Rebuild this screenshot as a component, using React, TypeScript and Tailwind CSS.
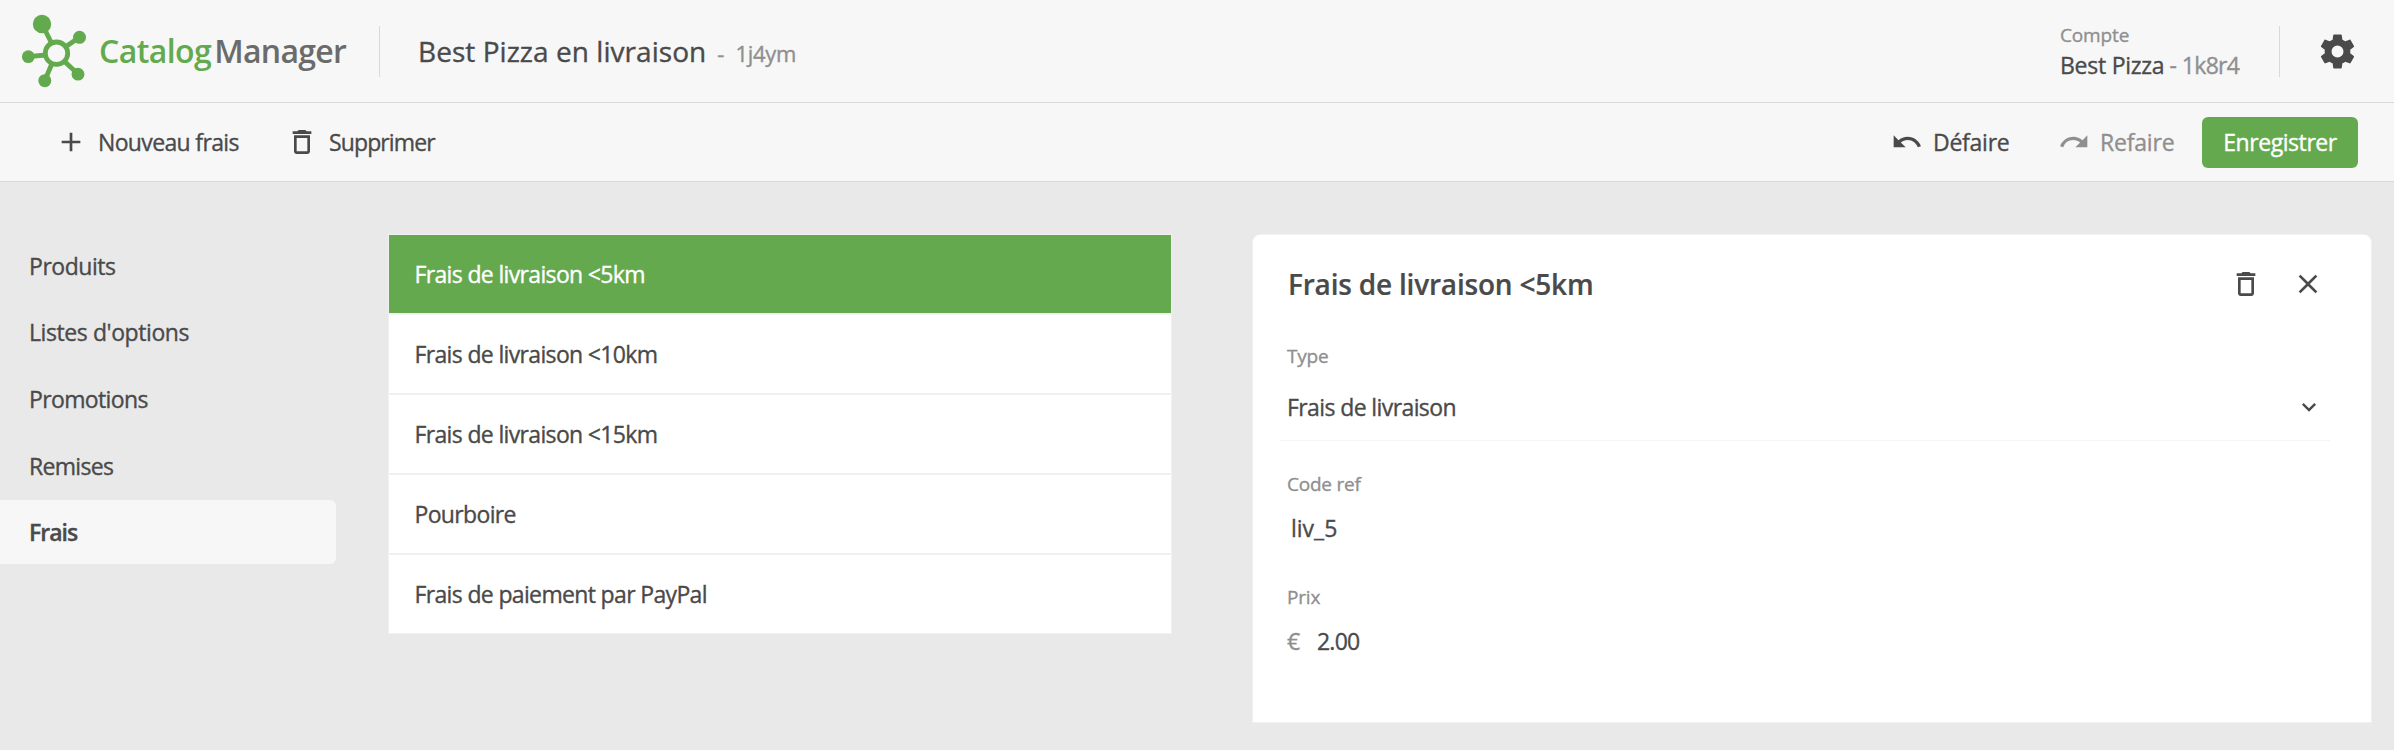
import React from "react";
import { MdAdd, MdClose, MdDeleteOutline, MdKeyboardArrowDown, MdRedo, MdUndo } from "react-icons/md";

const categories = [
  { label: "Produits", spacing: "tracking-[-0.46px]" },
  { label: "Listes d'options", spacing: "tracking-[-0.42px]" },
  { label: "Promotions", spacing: "tracking-[-0.63px]" },
  { label: "Remises", spacing: "tracking-[-0.68px]" },
  { label: "Frais", spacing: "tracking-[-0.98px]", active: true },
];

const fees = [
  { label: "Frais de livraison <5km", active: true },
  { label: "Frais de livraison <10km" },
  { label: "Frais de livraison <15km" },
  { label: "Pourboire" },
  { label: "Frais de paiement par PayPal" },
];

function Logo() {
  return (
    <svg className="h-[74px] w-[66px]" viewBox="21 14 66 74" fill="none" stroke="#62aa4d">
      <circle cx="56.5" cy="53.2" r="11.2" strokeWidth="4.8" />
      <path d="M42 24l9.500 19M79.500 37.300L66 46.500M28 56.700l18-1.700M44.700 80.700L52 63.500M78 74L64.500 61.500" strokeWidth="4.800" />
      <g fill="#62aa4d" stroke="none">
        <circle cx="42" cy="24" r="9.2" />
        <circle cx="79.5" cy="37.3" r="6.5" />
        <circle cx="28.3" cy="56.7" r="6.4" />
        <circle cx="44.8" cy="80.7" r="6.5" />
        <circle cx="78" cy="74.2" r="6.4" />
      </g>
    </svg>
  );
}

function Cog() {
  return (
    <svg className="size-[41px]" viewBox="0 0 24 24" fill="currentColor">
      <path d="M12 15.500A3.500 3.500 0 0 1 8.500 12 3.500 3.500 0 0 1 12 8.500a3.500 3.500 0 0 1 3.500 3.500 3.500 3.500 0 0 1-3.500 3.500m7.430-2.530c.040-.320.070-.640.070-.970s-.030-.660-.070-1l2.110-1.630c.190-.150.240-.420.120-.640l-2-3.460c-.120-.220-.390-.310-.610-.220l-2.490 1c-.520-.390-1.060-.730-1.690-.980l-.370-2.650A.506.506 0 0 0 14 2h-4c-.250 0-.460.180-.500.420l-.370 2.650c-.630.250-1.170.590-1.690.980l-2.490-1c-.220-.090-.490 0-.610.220l-2 3.460c-.130.220-.070.490.120.640L4.570 11c-.040.340-.070.670-.070 1s.030.650.070.970l-2.110 1.660c-.190.150-.250.420-.120.640l2 3.460c.120.220.390.300.610.220l2.490-1.010c.520.400 1.060.740 1.690.990l.370 2.650c.040.240.250.420.500.420h4c.250 0 .460-.180.500-.420l.370-2.650c.630-.260 1.170-.590 1.690-.990l2.490 1.010c.220.080.490 0 .610-.220l2-3.460c.120-.220.070-.490-.120-.640z" />
    </svg>
  );
}

function Header() {
  return (
    <header className="flex h-[103px] shrink-0 items-center border-b border-[#d9d9d9] bg-[#f7f7f7]">
      <div className="flex w-[379px] shrink-0 items-center pl-[21px]">
        <Logo />
        <div className="ml-[12px] flex gap-[3px] text-[32px] font-semibold [-webkit-text-stroke:0]">
          <span className="tracking-[-0.59px] text-[#62aa4d]">Catalog</span>
          <span className="tracking-[-0.7px] text-[#6b6b6b]">Manager</span>
        </div>
      </div>
      <div className="h-[51px] w-px bg-[#d9d9d9]" />
      <div className="flex items-baseline pl-[38px]">
        <h1 className="text-[28px] tracking-[0.05px]">Best Pizza en livraison</h1>
        <span className="ml-[11px] text-[22px] text-[#8f8f8f]">-</span>
        <span className="ml-[11px] text-[22px] tracking-[-0.25px] text-[#8f8f8f]">1j4ym</span>
      </div>
      <div className="ml-auto w-[219px] pb-[3px]">
        <div className="text-[19px] leading-[30px] tracking-[-0.15px] text-[#8f8f8f]">Compte</div>
        <div className="flex gap-[5px] leading-[30px]">
          <span className="tracking-[-0.25px]">Best Pizza</span>
          <span className="text-[#8f8f8f]">-</span>
          <span className="tracking-[-0.7px] text-[#8f8f8f]">1k8r4</span>
        </div>
      </div>
      <div className="h-[51px] w-px bg-[#d9d9d9]" />
      <button className="ml-[37px] mr-[36px]">
        <Cog />
      </button>
    </header>
  );
}

function Toolbar() {
  return (
    <div className="flex h-[79px] shrink-0 items-center border-b border-[#d9d9d9] bg-[#f7f7f7] pl-[55px] pr-[36px]">
      <button className="flex w-[231px] items-center gap-[11px]">
        <MdAdd className="size-8" />
        <span className="tracking-[-0.65px]">Nouveau frais</span>
      </button>
      <button className="flex items-center gap-[11px]">
        <MdDeleteOutline className="size-8" />
        <span className="tracking-[-0.88px]">Supprimer</span>
      </button>
      <button className="ml-auto flex w-[167px] items-center gap-[10px]">
        <MdUndo className="size-8" />
        <span className="tracking-[-0.25px]">Défaire</span>
      </button>
      <button className="flex w-[144px] items-center gap-[10px] text-[#8f8f8f]">
        <MdRedo className="size-8" />
        <span className="tracking-[-0.2px]">Refaire</span>
      </button>
      <button className="h-[51px] w-[156px] rounded-md bg-[#65a94e] text-white">
        <span className="tracking-[-0.43px]">Enregistrer</span>
      </button>
    </div>
  );
}

function Sidebar() {
  return (
    <nav className="flex w-[388px] shrink-0 flex-col gap-[2.6px]">
      {categories.map(({ label, spacing, active }) => (
        <a
          key={label}
          className={`flex h-16 w-[336px] items-center rounded-r-md pl-[29px] ${spacing} ${active ? "bg-[#f7f7f7] font-semibold" : ""}`}
        >
          {label}
        </a>
      ))}
    </nav>
  );
}

function FeeList() {
  return (
    <ul className="flex w-[784px] shrink-0 flex-col gap-[2px] self-start border border-[#f1f1f1] bg-[#f0f0f0]">
      {fees.map(({ label, active }) => (
        <li
          key={label}
          className={`flex h-[78px] items-center pl-[25.5px] tracking-[-0.65px] ${active ? "bg-[#65a94e] text-white" : "bg-white"}`}
        >
          {label}
        </li>
      ))}
    </ul>
  );
}

function FeePanel() {
  return (
    <section className="ml-[80px] h-[489px] w-[1120px] rounded-t-lg border border-[#f1f1f1] bg-white pl-[27px] pr-[41px]">
      <div className="flex h-[97px] items-center pl-[8px]">
        <h2 className="pt-px text-[28px] font-semibold tracking-[-0.2px] [-webkit-text-stroke:0.2px]">Frais de livraison &lt;5km</h2>
        <MdDeleteOutline className="ml-auto size-8" />
        <MdClose className="ml-[30px] mr-[6px] size-8" />
      </div>
      <div className="h-[109px] border-b border-[#f5f5f5] px-[7px] pt-[8px]">
        <div className="text-[19px] leading-[32px] tracking-[-0.2px] text-[#8f8f8f]">Type</div>
        <div className="mt-[17px] flex h-9 items-center justify-between">
          <span className="tracking-[-0.6px]">Frais de livraison</span>
          <MdKeyboardArrowDown className="size-7" />
        </div>
      </div>
      <div className="px-[7px] pt-[27px]">
        <div className="text-[19px] leading-[32px] tracking-[-0.22px] text-[#8f8f8f]">Code ref</div>
        <div className="mt-[10px] h-9 pl-[4px] leading-9">liv_5</div>
        <div className="mt-[35px] text-[19px] leading-[32px] tracking-[-0.16px] text-[#8f8f8f]">Prix</div>
        <div className="mt-[10px] flex h-9 leading-9">
          <span className="w-[30px] text-[#8f8f8f]">€</span>
          <span className="tracking-[-0.78px]">2.00</span>
        </div>
      </div>
    </section>
  );
}

export default function App() {
  return (
    <div className="flex h-[750px] w-[2394px] flex-col overflow-hidden bg-[#e9e9e9] font-['Open_Sans','Noto_Sans',sans-serif] text-[23px] text-[#4a4a4a] [-webkit-text-stroke:0.35px]">
      <Header />
      <Toolbar />
      <main className="flex grow pt-[52px]">
        <Sidebar />
        <FeeList />
        <FeePanel />
      </main>
    </div>
  );
}
